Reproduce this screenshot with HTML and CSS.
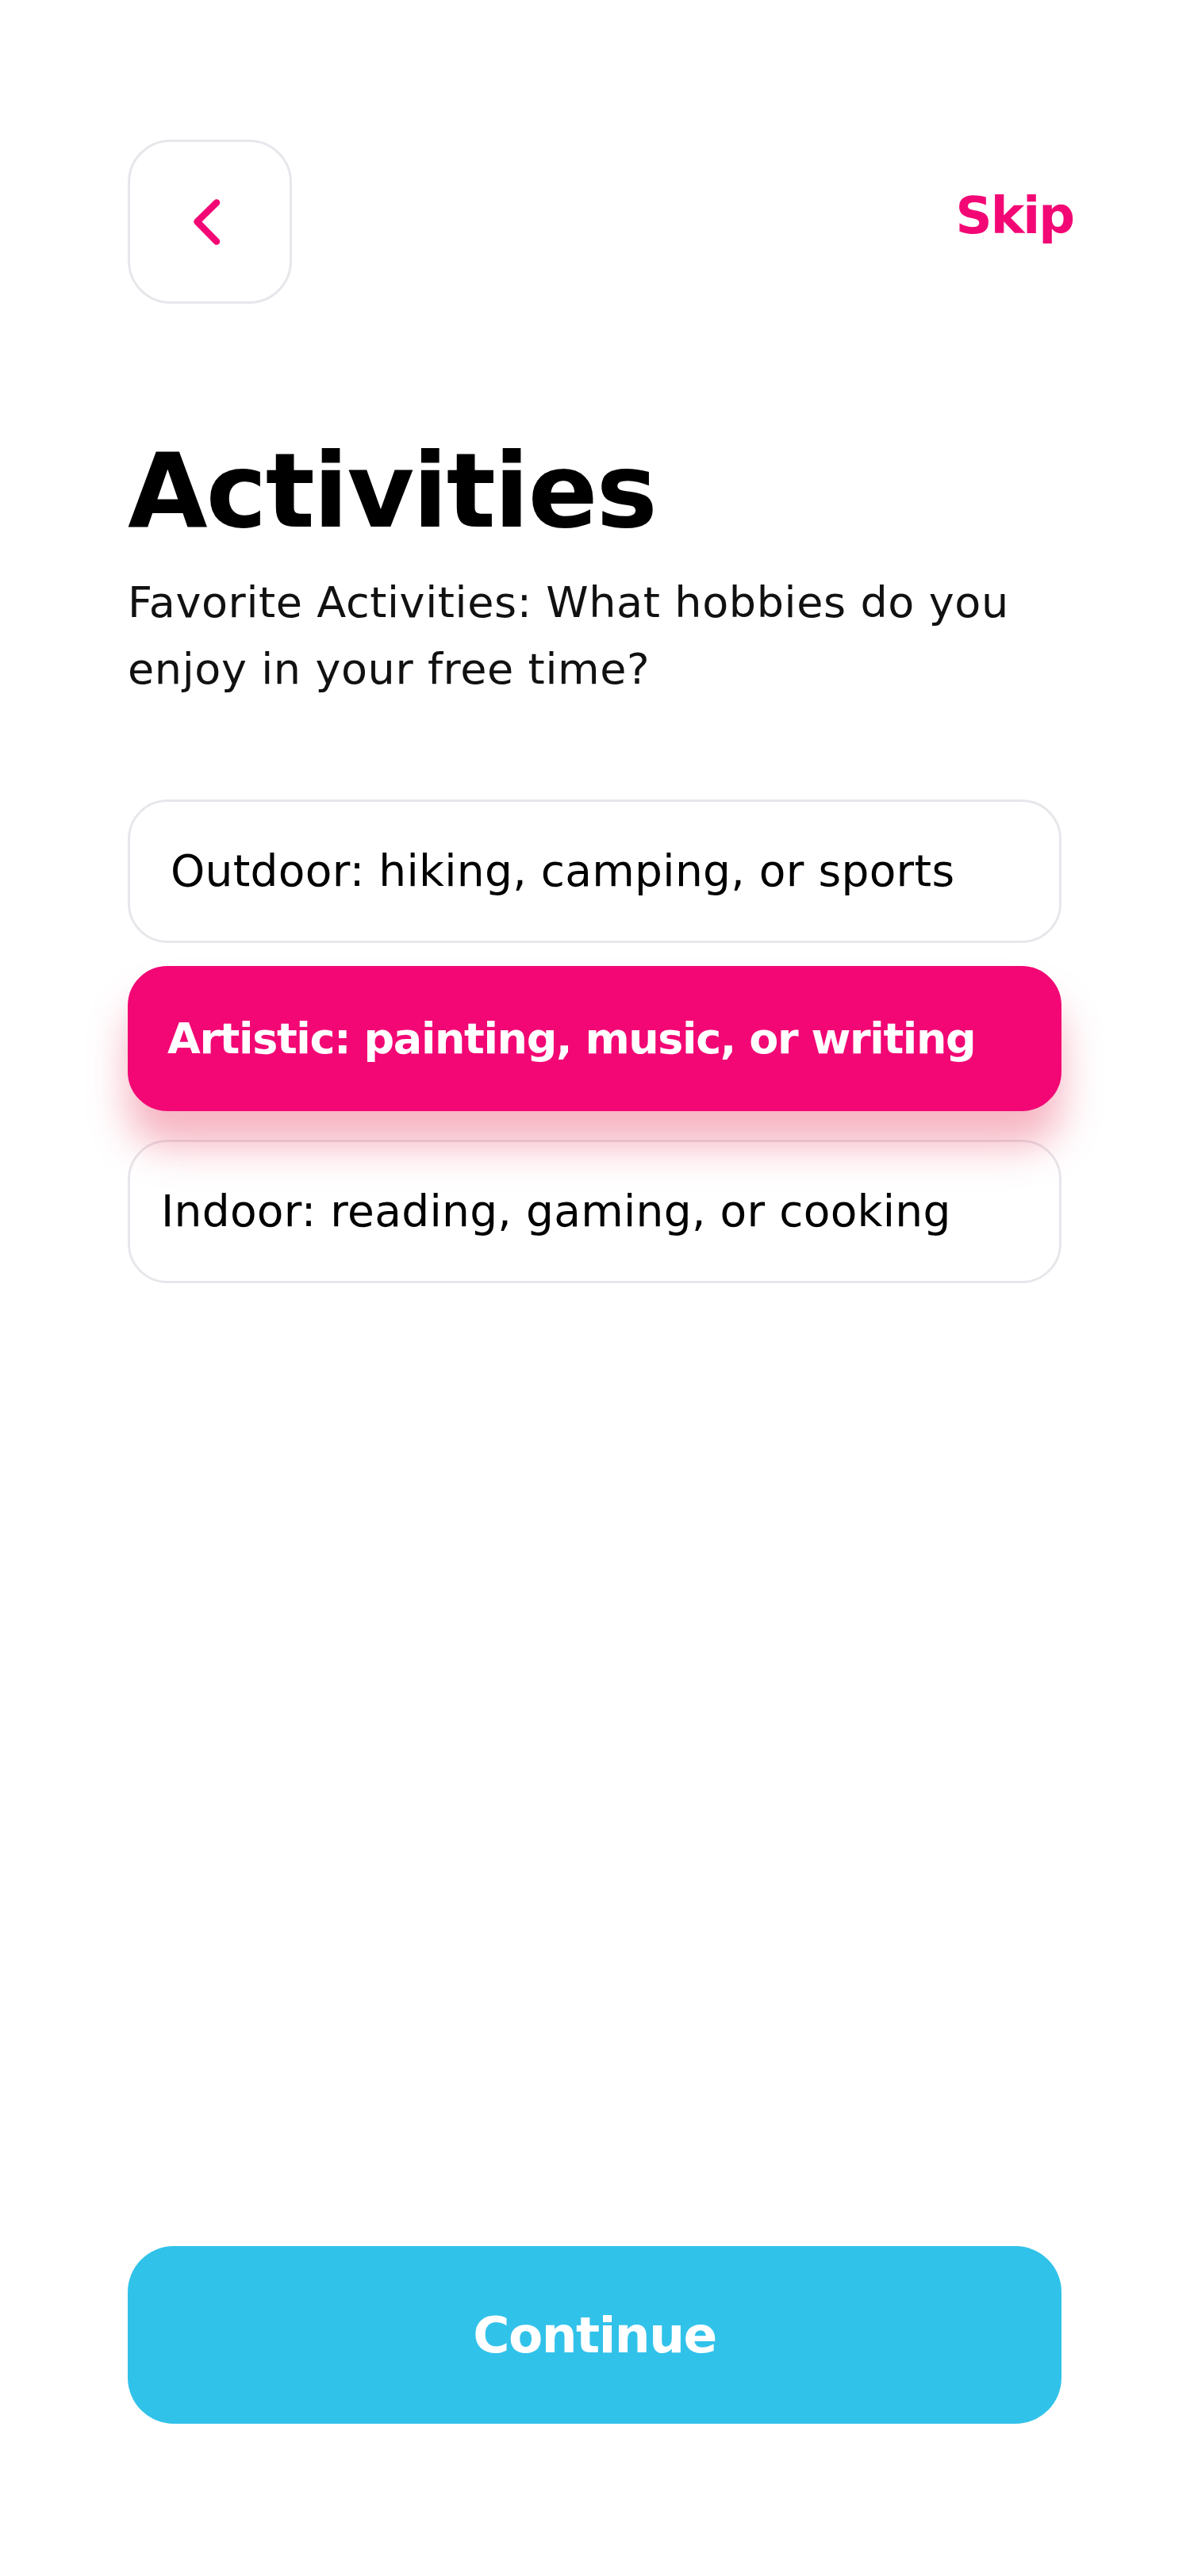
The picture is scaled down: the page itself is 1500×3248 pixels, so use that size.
FILE: index.html
```html
<!DOCTYPE html>
<html lang="en">
<head>
<meta charset="utf-8">
<title>Activities</title>
<link rel="stylesheet" href="styles.css">
</head>
<body>
<div class="screen">
  <header class="topbar">
    <button class="back-btn" aria-label="Back">
      <svg class="back-icon" width="40" height="64" viewBox="0 0 40 64" aria-hidden="true">
        <polyline points="30,7.5 5.5,31.5 30,56.5" fill="none" stroke="#f20775" stroke-width="8.5" stroke-linecap="round" stroke-linejoin="round"/>
      </svg>
    </button>
    <a class="skip" href="#">Skip</a>
  </header>
  <h1 class="title">Activities</h1>
  <p class="subtitle">Favorite Activities: What hobbies do you enjoy in your free time?</p>
  <ul class="options">
    <li class="option">Outdoor: hiking, camping, or sports</li>
    <li class="option option--selected">Artistic: painting, music, or writing</li>
    <li class="option option--compact">Indoor: reading, gaming, or cooking</li>
  </ul>
  <button class="continue-btn">Continue</button>
</div>
</body>
</html>
```
FILE: styles.css
```css
html, body {
  margin: 0;
  background: #ffffff;
}

body {
  font-family: "DejaVu Sans", "Noto Sans", sans-serif;
  color: #000000;
}

.screen {
  min-height: 3248px;
  box-sizing: border-box;
  display: flex;
  flex-direction: column;
  padding: 176px 162px 192px 161px;
}

.topbar {
  display: flex;
  justify-content: space-between;
  align-items: center;
  margin-right: -15px;
}

.back-btn {
  width: 207px;
  height: 207px;
  box-sizing: border-box;
  border: 3px solid #e8e6eb;
  border-radius: 54px;
  background: #ffffff;
  display: flex;
  align-items: center;
  justify-content: center;
  padding: 0;
  margin: 0;
}

.back-icon {
  display: block;
  margin-left: -3px;
}

.skip {
  color: #f20775;
  font-weight: 700;
  font-size: 64px;
  line-height: 1;
  letter-spacing: -2px;
  text-decoration: none;
  margin-bottom: 16px;
}

.title {
  margin: 158px 0 0;
  font-size: 130px;
  line-height: 156px;
  font-weight: 700;
  letter-spacing: -2px;
  color: #000000;
}

.subtitle {
  margin: 21px 0 0;
  font-size: 54px;
  line-height: 84px;
  letter-spacing: 0.6px;
  color: #111111;
}

.options {
  list-style: none;
  margin: 122px 0 0;
  padding: 0;
  display: flex;
  flex-direction: column;
  gap: 29px;
}

.option {
  height: 181px;
  box-sizing: border-box;
  border: 3px solid #e8e6eb;
  border-radius: 50px;
  display: flex;
  align-items: center;
  padding-left: 51px;
  font-size: 55px;
  line-height: 1;
  letter-spacing: 0.3px;
  color: #000000;
  background: transparent;
}

.option--selected {
  position: relative;
  z-index: 1;
  height: 183px;
  background: #f20775;
  border-color: #f20775;
  color: #ffffff;
  font-weight: 700;
  font-size: 54px;
  letter-spacing: -1.4px;
  padding-left: 47px;
  margin-bottom: 7px;
  box-shadow: 0 44px 50px rgba(230, 50, 85, 0.36);
}

.option--compact {
  padding-left: 39px;
}

.continue-btn {
  margin-top: auto;
  height: 224px;
  width: 100%;
  border: none;
  border-radius: 58px;
  background: #31c2ea;
  color: #ffffff;
  font-family: inherit;
  font-weight: 700;
  font-size: 63px;
  letter-spacing: -1.5px;
  padding: 0;
}
```
